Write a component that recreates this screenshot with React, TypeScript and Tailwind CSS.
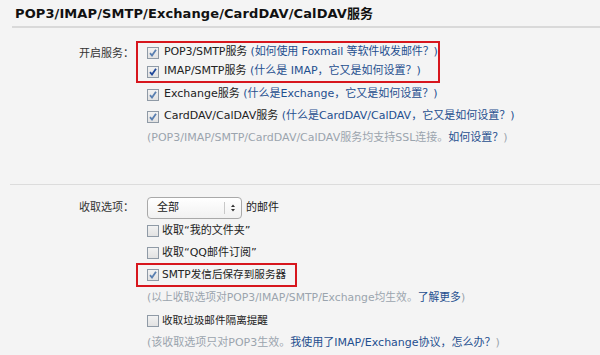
import React from "react";

const font = { fontFamily: '"DejaVu Sans", "Noto Sans CJK SC", sans-serif' };

function Box({ checked, light }: { checked?: boolean; light?: boolean }) {
  return (
    <span className="inline-flex h-[12px] w-[12px] shrink-0 items-center justify-center border border-[#8f9aa6] bg-gradient-to-b from-[#f2f2f2] to-[#e2e2e2]">
      {checked && (
        <svg width="10" height="10" viewBox="0 0 10 10">
          <path d="M2 5.2 L4 7.6 L8 1.8" fill="none" stroke={light ? "#5a7fb0" : "#21489a"} strokeWidth="1.8" />
        </svg>
      )}
    </span>
  );
}

function Row({ children, h = "h-[21px]" }: { children: React.ReactNode; h?: string }) {
  return <div className={`flex items-center gap-[5px] ${h} whitespace-nowrap`}>{children}</div>;
}

export default function App() {
  return (
    <div className="h-[355px] w-[600px] overflow-hidden bg-[#f4f4f4] text-[11px] text-[#222]" style={font}>
      <div className="ml-[12px] border-b-2 border-[#d9d9d9] pl-[3px] pt-[4px] pb-[2px] text-[13px] font-bold leading-[20px] tracking-[0.1px] text-[#111]">
        POP3/IMAP/SMTP/Exchange/CardDAV/CalDAV服务
      </div>

      <div className="mt-[13px] flex">
        <div className="w-[134px] shrink-0 pt-[2px] text-right leading-[21px] text-[#333]">开启服务：</div>
        <div className="ml-[2px] flex flex-col">
          <div className="w-[304px] border-2 border-[#d7161d] pl-[9px]">
            <Row h="h-[19px]">
              <Box checked light />
              <span className="tracking-[-0.12px]">
                POP3/SMTP服务 <span className="text-[#1f4f8f]">(如何使用 Foxmail 等软件收发邮件？)</span>
              </span>
            </Row>
            <Row h="h-[19px]">
              <Box checked />
              <span>
                IMAP/SMTP服务 <span className="text-[#1f4f8f]">(什么是 IMAP，它又是如何设置？)</span>
              </span>
            </Row>
          </div>
          <div className="pl-[11px]">
            <Row h="h-[23px]">
              <Box checked light />
              <span>
                Exchange服务 <span className="text-[#1f4f8f]">(什么是Exchange，它又是如何设置？)</span>
              </span>
            </Row>
            <Row>
              <Box checked light />
              <span>
                CardDAV/CalDAV服务 <span className="text-[#1f4f8f]">(什么是CardDAV/CalDAV，它又是如何设置？)</span>
              </span>
            </Row>
            <Row h="h-[22px]">
              <span className="text-[#9ba4ae]">
                (POP3/IMAP/SMTP/CardDAV/CalDAV服务均支持SSL连接。<span className="text-[#1f4f8f]">如何设置？</span>)
              </span>
            </Row>
          </div>
        </div>
      </div>

      <div className="ml-[10px] mt-[35px] border-t border-[#dcdcdc]" />

      <div className="mt-[12px] flex">
        <div className="w-[134px] shrink-0 text-right leading-[22px] text-[#333]">收取选项：</div>
        <div className="ml-[2px] flex flex-col">
          <div className="flex h-[22px] items-center gap-[4px] pl-[11px]">
            <div className="flex h-[22px] w-[95px] items-center rounded-[4px] border border-[#a9a9a9] bg-gradient-to-b from-white to-[#f1f1f1] pl-[9px]">
              <span className="flex-1">全部</span>
              <span className="h-[12px] w-px bg-[#c8c8c8]" />
              <svg width="16" height="12" viewBox="0 0 16 12">
                <path d="M6 5 L8 2.5 L10 5 Z M6 7 L8 9.5 L10 7 Z" fill="#333" />
              </svg>
            </div>
            <span>的邮件</span>
          </div>
          <div className="pl-[11px]">
            <Row h="h-[24px]">
              <Box />
              <span className="-ml-[2px]">收取“我的文件夹”</span>
            </Row>
            <Row h="h-[20px]">
              <Box />
              <span className="-ml-[2px]">收取“QQ邮件订阅”</span>
            </Row>
          </div>
          <div className="w-[161px] border-2 border-[#d7161d] pl-[9px]">
            <Row h="h-[20px]">
              <Box checked light />
              <span className="-ml-[2px] text-[10.6px]">SMTP发信后保存到服务器</span>
            </Row>
          </div>
          <div className="pl-[11px]">
            <Row h="h-[22px]">
              <span className="text-[10.8px] text-[#9ba4ae]">
                (以上收取选项对POP3/IMAP/SMTP/Exchange均生效。<span className="text-[#1f4f8f]">了解更多</span>)
              </span>
            </Row>
            <Row h="h-[23px]">
              <Box />
              <span className="-ml-[2px] text-[10.6px]">收取垃圾邮件隔离提醒</span>
            </Row>
            <Row h="h-[22px]">
              <span className="text-[#9ba4ae]">
                (该收取选项只对POP3生效。<span className="text-[#1f4f8f]">我使用了IMAP/Exchange协议，怎么办？</span>)
              </span>
            </Row>
          </div>
        </div>
      </div>
    </div>
  );
}
